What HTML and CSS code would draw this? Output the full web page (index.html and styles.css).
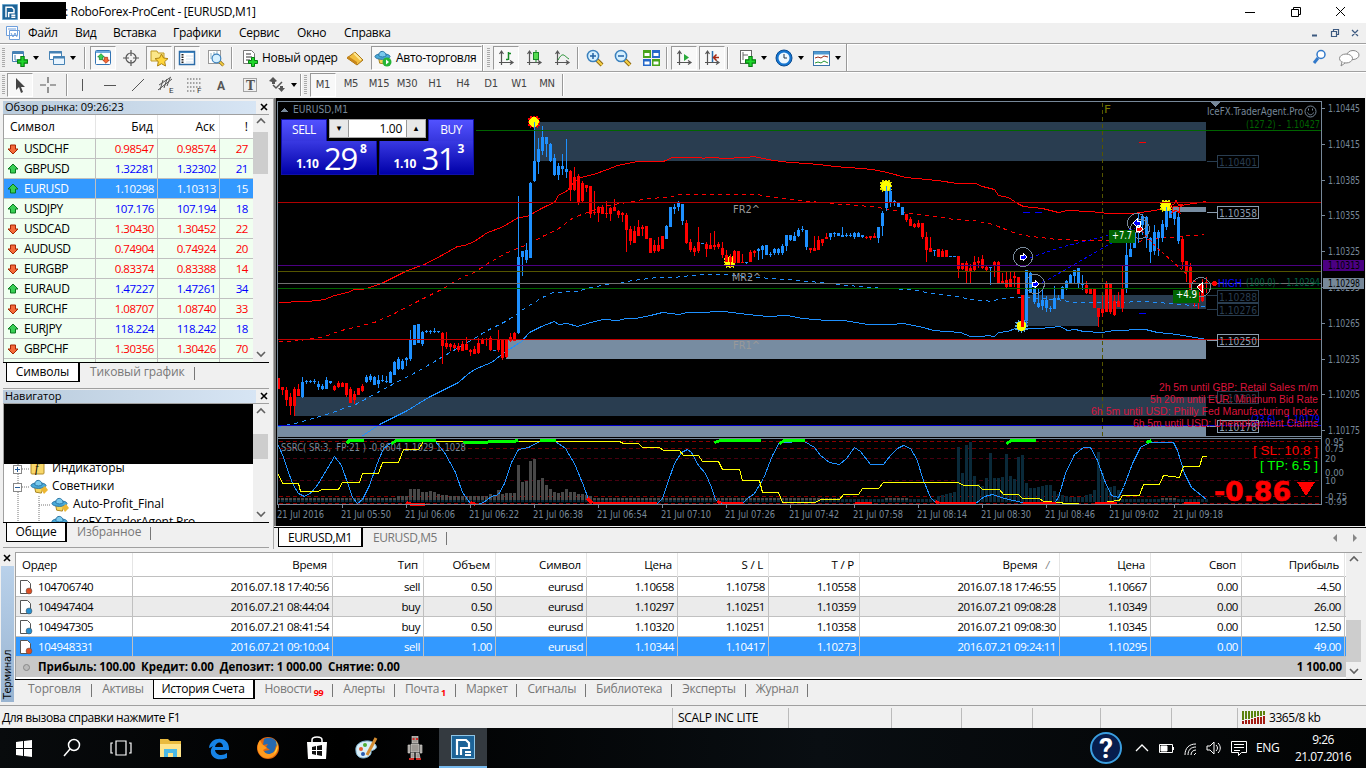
FILE: index.html
```
<!DOCTYPE html>
<html lang="ru">
<head>
  <meta charset="UTF-8">
  <meta name="viewport" content="width=device-width, initial-scale=1">
  <title>RoboForex-ProCent - [EURUSD,M1]</title>
  <link rel="stylesheet" href="styles.css">
</head>
<body>

<!-- shared icon shapes -->
<svg class="defs" width="0" height="0">
  <symbol id="logo" viewBox="0 0 24 24">
    <rect width="24" height="24" fill="#8fc4e4"/><rect x="1" y="1" width="22" height="22" fill="#1d6397"/>
    <path d="M6 20V5h9l3 3v5h-8v7M14 17h6M14 20h6" fill="none" stroke="#fff" stroke-width="2.2"/>
  </symbol>
  <symbol id="plus" viewBox="0 0 10 10"><path d="M3.5 0.5h3v3h3v3h-3v3h-3v-3h-3v-3h3z" fill="#1fd62b" stroke="#087d12"/></symbol>
  <symbol id="axes" viewBox="0 0 18 18"><path d="M4.500 2v14M2 13.500h14M2.500 5l2-3 2 3M13 11.500l3 2-3 2" fill="none" stroke="#555" stroke-width="1.200"/></symbol>
  <symbol id="lens" viewBox="0 0 18 18">
    <path d="M11 11l5 5" stroke="#8a6510" stroke-width="4"/><path d="M11 11l5 5" stroke="#f5cf45" stroke-width="2.200"/>
    <circle cx="7" cy="7" r="5.600" fill="#d5f0ff" stroke="#3a80bd" stroke-width="1.500"/>
  </symbol>
  <symbol id="hat" viewBox="0 0 18 18">
    <path d="M5 10l1 5 6 1 2-6z" fill="#f5d55c" stroke="#a5811d"/><ellipse cx="9" cy="8" rx="8" ry="3" fill="#48a9d8" stroke="#2671a0"/>
    <path d="M5 7c0-6 7-6 8 0-2 2-6 2-8 0" fill="#79c9ed" stroke="#2671a0"/>
  </symbol>
  <symbol id="up" viewBox="0 0 12 12"><path d="M6 1l5 5H8.500v4h-5V6H1z" fill="#38cf55" stroke="#08761e"/></symbol>
  <symbol id="down" viewBox="0 0 12 12"><path d="M6 11l5-5H8.500V2h-5v4H1z" fill="#f46a38" stroke="#a52604"/></symbol>
</svg>

<div class="titlebar">
  <svg class="app-icon"><use href="#logo"/></svg>
  <span class="mask"></span>
  <span class="title">: RoboForex-ProCent - [EURUSD,M1]</span>
  <svg class="win-buttons" width="110" height="22" fill="none" stroke="#000">
    <path d="M4 11.500h10M50.500 8.500h7v7h-7zM52.500 8V6.500h7v7H58M95 6l9 9M104 6l-9 9"/>
  </svg>
</div>

<div class="menubar">
  <svg class="menu-icon" width="16" height="16" fill="#fff" stroke="#6e9fdc"><path d="M1.500 1.500h11v9h-11zM3 4h8M4.500 5.500h10v9h-10zM6 8l2 4 2-4 2 4"/></svg>
  <span class="m1">Файл</span><span class="m2">Вид</span><span class="m3">Вставка</span><span class="m4">Графики</span><span class="m5">Сервис</span><span class="m6">Окно</span><span class="m7">Справка</span>
  <svg class="mdi" width="54" height="16" fill="none" stroke="#3d5a80"><path d="M5 10.500h5" stroke-width="2"/><path d="M24.500 6.500h5v5h-5zM26.500 6V4.500h5v5H30M45 5l6 6M51 5l-6 6" stroke-width="1.200"/></svg>
</div>

<div class="toolbar">
  <i class="grip"></i>
  <div class="tool drop"><svg><path d="M2.500 2.500h11v10h-11z" fill="#fff" stroke="#4682b4"/><path d="M2 4h12" stroke="#4682b4" stroke-width="2"/><path d="M5 6v5h5" fill="none" stroke="#4682b4"/><use href="#plus" x="7" y="7" width="11" height="11"/></svg></div>
  <div class="tool drop profiles"><svg><path d="M1.500 2.500h12v8h-12z" fill="#fff" stroke="#4682b4"/><path d="M5.500 7.500h11v8h-11z" fill="#e9f5ff" stroke="#4682b4"/><path d="M1 3.500h13M5 8.500h12" stroke="#4682b4" stroke-width="2"/></svg></div>
  <i class="sep"></i>
  <div class="tool on"><svg><rect x="1.500" y="1.500" width="15" height="14" rx="1" fill="#fff" stroke="#3475b5"/><path d="M2 3h14" stroke="#6facde" stroke-width="2"/><use href="#up" x="3" y="4" width="8" height="8"/><use href="#down" x="8" y="7" width="8" height="8"/></svg></div>
  <div class="tool"><svg fill="none" stroke="#555" stroke-width="1.200"><circle cx="9" cy="9" r="5"/><path d="M9 1v6M9 11v6M1 9h6M11 9h6"/></svg></div>
  <div class="tool on"><svg><path d="M1 2h6l1 2h6v8H1z" fill="#fbe789" stroke="#c19b24"/><path d="M11.500 5l2 4 4.500.600-3.300 3 .8 4.400-4-2.300-4 2.300.8-4.400L5 9.600 9.500 9z" fill="#ffd63b" stroke="#ad8214"/></svg></div>
  <div class="tool on"><svg><rect x="1.500" y="2.500" width="15" height="13" fill="#fff" stroke="#2d6da9" stroke-width="1.500"/><path d="M2 3.500h14" stroke="#438ac4"/><path d="M4.500 5v9" stroke="#222" stroke-width="2" stroke-dasharray="1.500 1"/><path d="M8 7h7M8 10h7M8 13h7" stroke="#d6e4ef"/></svg></div>
  <div class="tool"><svg><rect x="2.500" y="1.500" width="12" height="13" fill="#fff" stroke="#999"/><path d="M5 4v6M8 3v8M11 2v8" stroke="#8cb3c7"/><use href="#lens" x="5" y="4" width="14" height="14"/></svg></div>
  <i class="sep wide"></i>
  <div class="tool order"><svg><path d="M2.500 1.500h8l3 3v10h-11z" fill="#fff" stroke="#777"/><path d="M5 5h5M5 8h6M5 11h4" stroke="#333"/><use href="#plus" x="7" y="8" width="10" height="10"/></svg><span>Новый ордер</span></div>
  <div class="tool gold"><svg><path d="M1 9l8-6 8 8-6 5z" fill="#f2bf40" stroke="#a57114"/><path d="M1 9l10 7v-3L2 7z" fill="#c9871b"/><path d="M8 4l7 7" stroke="#ffe994" stroke-width="2"/></svg></div>
  <div class="tool on auto"><svg><use href="#hat" width="17" height="17"/><circle cx="13" cy="13" r="4.500" fill="#27b637"/><path d="M12 10.500l3 2.500-3 2.500z" fill="#fff"/></svg><span>Авто-торговля</span></div>
  <i class="sep end"></i><i class="grip second"></i>
  <div class="tool on"><svg><use href="#axes" width="18" height="18"/><path d="M11.500 3v8M9 10.500h2M12 4.500h2" stroke="#168926" stroke-width="1.500"/></svg></div>
  <div class="tool"><svg><use href="#axes" width="18" height="18"/><path d="M11 1v12" stroke="#168926"/><rect x="8.500" y="3.500" width="5" height="7" fill="#54dc50" stroke="#168926"/></svg></div>
  <div class="tool"><svg><use href="#axes" width="18" height="18"/><path d="M5 11c5-9 6-4 11-1" fill="none" stroke="#168926"/></svg></div>
  <i class="sep tight"></i>
  <div class="tool"><svg><use href="#lens" width="18" height="18"/><path d="M4 7h6M7 4v6" stroke="#2262a4" stroke-width="1.500"/></svg></div>
  <div class="tool"><svg><use href="#lens" width="18" height="18"/><path d="M4 7h6" stroke="#2262a4" stroke-width="1.500"/></svg></div>
  <div class="tool"><svg><path d="M1 1h8v8H1zM10 10h8v7h-8z" fill="#47a41b"/><path d="M10 1h8v8h-8zM1 10h8v7H1z" fill="#2568c9"/><path d="M2.500 4h5v3h-5zM11.500 4h5v3h-5zM2.500 12.500h5v3h-5zM11.500 12.500h5v3h-5z" fill="#fff"/></svg></div>
  <i class="sep tight"></i>
  <div class="tool on"><svg><use href="#axes" width="18" height="18"/><path d="M9 5l5 3.500L9 12z" fill="#28a93a"/></svg></div>
  <div class="tool on"><svg><use href="#axes" width="18" height="18"/><path d="M9.500 2v11" stroke="#286daa" stroke-width="1.500"/><path d="M11 8.500h5M13.500 5.500l-3 3 3 3" fill="none" stroke="#a62812" stroke-width="1.500"/></svg></div>
  <i class="sep tight"></i>
  <div class="tool drop chartdrop"><svg><rect x="2.500" y="1.500" width="11" height="13" fill="#fff" stroke="#666"/><path d="M5 3v8M5 6h5" stroke="#666"/><use href="#plus" x="7" y="7" width="11" height="11"/></svg></div>
  <div class="tool drop"><svg><circle cx="9" cy="9" r="8" fill="#1475d1" stroke="#0a4b91"/><circle cx="9" cy="9" r="5.500" fill="#eef8ff"/><path d="M9 5v4h3" fill="none" stroke="#234"/></svg></div>
  <div class="tool drop"><svg><rect x="1.500" y="2.500" width="16" height="14" fill="#fff" stroke="#3973aa"/><path d="M2 4h15" stroke="#4e99d1" stroke-width="3"/><path d="M3 9l3-1 3 1 3-2 4 1" fill="none" stroke="#9c2d19"/><path d="M3 14l3-1 3 1 3-2 4 2" fill="none" stroke="#269632"/></svg></div>
  <i class="sep last"></i>
  <svg class="search-tools" width="48" height="18"><circle cx="9" cy="5.500" r="4" fill="#fff" stroke="#3279ca" stroke-width="1.500"/><path d="M6 9l-4 5" stroke="#3279ca" stroke-width="3"/><g fill="#fff" stroke="#888"><ellipse cx="41" cy="6" rx="6" ry="4.500"/><ellipse cx="34" cy="9.500" rx="6.500" ry="4.500"/><path d="M30 13l-1 4 4-3"/></g></svg>
</div>

<div class="toolbar drawbar">
  <i class="grip"></i>
  <div class="tool on"><svg><path d="M5 2v12l3-3 2 6 2-1-2-5h4z" fill="#444"/></svg></div>
  <div class="tool"><svg stroke="#555"><path d="M9 1v6M9 11v6M1 9h6M11 9h6" stroke-width="1.200"/></svg></div>
  <i class="sep"></i>
  <div class="tool vline"><svg><path d="M9.500 3v12" stroke="#555"/></svg></div>
  <div class="tool"><svg><path d="M3 9.500h12" stroke="#555"/></svg></div>
  <div class="tool"><svg><path d="M3 15L15 3" stroke="#555"/></svg></div>
  <div class="tool"><svg stroke="#555"><path d="M1 14L15 3M2 9L14 1M3 14L6 4M7 12l3-9M10 10l3-8" fill="none"/><text x="12" y="17" class="icon-letter">E</text></svg></div>
  <div class="tool"><svg><path d="M2 3h14M2 7h14M2 11h14M2 15h9" stroke="#555" stroke-dasharray="1.500 1.500"/><text x="12" y="17" class="icon-letter">F</text></svg></div>
  <div class="tool"><svg><text x="4" y="14" class="letter-a">A</text></svg></div>
  <div class="tool"><svg><rect x="2.500" y="2.500" width="13" height="13" fill="none" stroke="#555" stroke-dasharray="1 1"/><text x="5" y="14" class="letter-t">T</text></svg></div>
  <div class="tool drop"><svg fill="#555"><path d="M1 5l4-4 4 4-2 1v2H4V6zM10 12h2v-2h3v2h2l-3.500 4z"/><path d="M5 9l3 3 6-6" fill="none" stroke="#555" stroke-width="1.500"/></svg></div>
  <i class="sep period-edge"></i><i class="grip second"></i>
  <div class="period on">M1</div><div class="period">M5</div><div class="period">M15</div><div class="period">M30</div><div class="period">H1</div><div class="period">H4</div><div class="period">D1</div><div class="period">W1</div><div class="period">MN</div>
  <i class="sep period-last"></i>
</div>

<div class="workspace">
  <div class="sidebar">
    <div class="panel market">
      <div class="panel-title"><span>Обзор рынка: 09:26:23</span><svg class="close"><path d="M1 1l6 6M7 1L1 7"/></svg></div>
      <div class="panel-body">
        <div class="quotes">
          <div class="quote head"><span>Символ</span><span>Бид</span><span>Аск</span><span>!</span></div>
          <div id="quotes"></div>
        </div>
        <div class="scroll"><svg><path d="M4 8l4-4 4 4"/></svg><i></i><svg><path d="M4 3l4 4 4-4"/></svg></div>
      </div>
      <div class="tabs"><b>Символы</b><span>Тиковый график</span></div>
    </div>
    <div class="panel navigator">
      <div class="panel-title"><span>Навигатор</span><svg class="close"><path d="M1 1l6 6M7 1L1 7"/></svg></div>
      <div class="panel-body">
        <div class="tree">
          <div class="redacted"></div>
          <div class="node"><svg width="48" height="18"><path d="M14 0v18M14 9h12" class="dots"/><rect x="9.500" y="5.500" width="8" height="8" class="expand"/><path d="M11 9.500h5M13.500 7v5" stroke="#285e9b"/><rect x="27" y="1" width="13" height="13" rx="1" fill="#f8d769" stroke="#b28d2b"/><text x="31" y="12" class="fn">f</text></svg><span>Индикаторы</span></div>
          <div class="node"><svg width="48" height="18"><path d="M14 0v18M14 9h12" class="dots"/><rect x="9.500" y="5.500" width="8" height="8" class="expand"/><path d="M11 9.500h5" stroke="#285e9b"/><use href="#hat" x="26" y="0" width="17" height="17"/><path d="M37 11l4-3 3 4-4 4z" fill="#edb733"/></svg><span>Советники</span></div>
          <div class="node child"><svg width="69" height="18"><path d="M14 0v18M35 0v18M35 9h12" class="dots"/><use href="#hat" x="47" y="0" width="17" height="17"/><path d="M58 11l4-3 3 4-4 4z" fill="#edb733"/></svg><span>Auto-Profit_Final</span></div>
          <div class="node child"><svg width="69" height="18"><path d="M14 0v18M35 0v18" class="dots"/><use href="#hat" x="47" y="0" width="17" height="17"/></svg><span>IceFX.TraderAgent.Pro</span></div>
        </div>
        <div class="scroll"><svg><path d="M4 9l4-4 4 4"/></svg><i></i><svg><path d="M4 3l4 4 4-4"/></svg></div>
      </div>
      <div class="tabs"><b>Общие</b><span>Избранное</span></div>
    </div>
  </div>

  <div class="chart-pane">
    <div class="chart-window">
      <svg id="chart" viewBox="276 98 1088 428" width="1088" height="428"></svg>
      <div class="trade">
        <div class="trade-top">
          <div class="side">SELL</div>
          <div class="lots"><button>&#9662;</button><span>1.00</span><button>&#9652;</button></div>
          <div class="side">BUY</div>
        </div>
        <div class="prices">
          <div class="price"><small>1.10</small><big>29</big><sup>8</sup></div>
          <div class="price"><small>1.10</small><big>31</big><sup>3</sup></div>
        </div>
      </div>
    </div>
    <div class="tabs chart-tabs"><b>EURUSD,M1</b><span>EURUSD,M5</span>
      <svg width="30" height="10" fill="#888"><path d="M6 1v8L2 5zM22 1v8l4-4z"/></svg></div>
  </div>
</div>

<div class="terminal">
  <div class="terminal-side"><svg class="close"><path d="M1 1l6 6M7 1L1 7"/></svg><div><span>Терминал</span></div></div>
  <div class="terminal-main">
    <div class="panel-body">
      <div class="orders">
        <div class="order-row head"><span>Ордер</span><span>Время</span><span>Тип</span><span>Объем</span><span>Символ</span><span>Цена</span><span>S / L</span><span>T / P</span><span>Время &nbsp; <em>/</em></span><span>Цена</span><span>Своп</span><span>Прибыль</span></div>
        <div id="orders"></div>
        <div class="summary"><i></i><span>Прибыль: 100.00&nbsp; Кредит: 0.00&nbsp; Депозит: 1 000.00&nbsp; Снятие: 0.00</span><span>1 100.00</span></div>
      </div>
      <div class="scroll"><svg><path d="M4 8l4-4 4 4"/></svg><i></i><svg><path d="M4 3l4 4 4-4"/></svg></div>
    </div>
    <div class="tabs"><span>Торговля</span><span class="plain">Активы</span><b>История Счета</b><span>Новости<sub>99</sub></span><span>Алерты</span><span>Почта<sub>1</sub></span><span>Маркет</span><span>Сигналы</span><span>Библиотека</span><span>Эксперты</span><span>Журнал</span></div>
  </div>
</div>

<div class="statusbar">
  <span>Для вызова справки нажмите F1</span><span>SCALP INC LITE</span><span></span><span></span><span></span><span></span><span></span><span></span>
  <span><svg width="24" height="13"><path d="M1 0v9M4 0v8M7 0v8M10 0v7M13 0v6M16 0v5M19 0v5M22 0v4" stroke="#5c820e" stroke-width="2"/><path d="M1 10v3M4 9v4M7 9v4M10 8v5M13 7v6M16 6v7M19 6v7M22 5v8" stroke="#a41b12" stroke-width="2"/></svg>3365/8 kb</span>
</div>

<div class="taskbar">
  <div class="task"><svg fill="#fff"><path d="M4 6l7-1v7H4zM12 5l8-1v8h-8zM4 13h7v7l-7-1zM12 13h8v8l-8-1z"/></svg></div>
  <div class="task"><svg fill="none" stroke="#fff" stroke-width="1.500"><circle cx="14" cy="9" r="5.500"/><path d="M10 13l-6 7"/></svg></div>
  <div class="task"><svg fill="none" stroke="#fff" stroke-width="1.200"><path d="M7 5h10v14H7zM4 7H2v10h2M20 7h2v10h-2"/></svg></div>
  <div class="task"><svg><path d="M2 3h8l2 2h11v16H2z" fill="#e9ba3e"/><path d="M2 8h21v13H2z" fill="#ffe48a"/><path d="M6 21v-8h13v8h-4v-4h-5v4z" fill="#4bb9e6"/></svg></div>
  <div class="task"><svg><path d="M2 12C3 0 23-1 22 14H8c1 6 8 6 12 3v5C7 27 0 17 6 10c-2 1-3 2-4 2zm6-1h8c0-6-7-6-8 0z" fill="#1683e6"/></svg></div>
  <div class="task"><svg><circle cx="12" cy="12" r="11" fill="#e5670b"/><path d="M8 3c6-3 13 0 14 7-2-2-2 0-3 3-1 6-9 7-11 2l6-1-4-3 2-3-5 1z" fill="#276ab0"/><path d="M4 4c-5 7-2 17 7 18 8 0 11-6 11-12-5 10-12 10-15 4l4-2-5-4z" fill="#ff9b1e"/><path d="M20 5c3 4 2 10-2 13l3-8z" fill="#ffd43a"/></svg></div>
  <div class="task"><svg><path d="M2 6h20l-1 17H3z" fill="#fff"/><path d="M7 7V4c0-4 10-4 10 0v3" fill="none" stroke="#fff" stroke-width="1.500"/><path d="M7 11l4-1v4H7zM12 10l5-1v5h-5zM7 15h4v4l-4-1zM12 15h5v5l-5-1z" fill="#111"/></svg></div>
  <div class="task"><svg><path d="M2 15C0 5 16 2 21 8c4 5-2 6-4 7 1 4-3 7-8 7-4 0-7-3-7-7z" fill="#d9eff9" stroke="#7eb3d1"/><circle cx="7" cy="13" r="2" fill="#e35b2b"/><circle cx="11" cy="9" r="2" fill="#50ac35"/><circle cx="9" cy="18" r="2" fill="#285bb0"/><path d="M13 19L22 2" stroke="#d28c32" stroke-width="3"/></svg></div>
  <div class="task"><svg><path d="M9 0h6v7H9zM8 8h8v8H8zM5 9h2v8H5zM17 9h2v8h-2zM8 17h3v5H8zM13 17h3l1 5h-4z" fill="#9d9994" stroke="#dedbd6" stroke-width=".6"/><path d="M9.500 3h2M13 3h2M6 23h5M13 23h5" stroke="#d02b25" stroke-width="2"/></svg></div>
  <div class="task running"><svg><use href="#logo" width="24" height="24"/></svg></div>
  <div class="tray">
    <svg width="32" height="32"><circle cx="16" cy="16" r="15" fill="#071d4d" stroke="#3b9edf" stroke-width="2"/><text x="9" y="26" class="help">?</text></svg>
    <svg class="tray-icons" width="112" height="20" fill="none" stroke="#fff"><path d="M1 13l6-6 6 6" stroke-width="1.300"/><path d="M24.500 6.500h13v8h-13z"/><path d="M26 8h6v5h-6z" fill="#fff"/><path d="M38.500 9v3"/><path d="M50 17c0-7 4-11 11-11M53 17c0-5 3-8 8-8M56 17c0-3 2-5 5-5M59 17l2-2"/><path d="M72 8h3l4-4v12l-4-4h-3zM81 7c2 2 2 4 0 6M83 5c3 3 3 7 0 10"/><path d="M96.500 3.500h15v11h-5l-3 3v-3h-7zM99 6.500h10M99 9.500h10M99 12.500h6"/></svg>
    <span class="lang">ENG</span>
    <div class="clock">9:26<br>21.07.2016</div>
  </div>
</div>

<script src="app.js"></script>
</body>
</html>
```
FILE: styles.css
```
* {
  box-sizing: border-box;
  margin: 0;
  padding: 0;
}

body {
  width: 1366px;
  height: 768px;
  overflow: hidden;
  display: flex;
  flex-direction: column;
  background: #f0f0f0;
  color: #000;
  font: 12px/16px "Open Sans", "Noto Sans", sans-serif;
  letter-spacing: -0.3px;
  white-space: nowrap;
}

.defs {
  position: absolute;
}

.titlebar {
  height: 23px;
  background: #fff;
  display: flex;
  align-items: center;
}

.app-icon {
  width: 16px;
  height: 16px;
  margin-left: 2px;
}

.mask {
  width: 46px;
  height: 17px;
  margin: -3px 0 0 2px;
  background: #000;
}

.title {
  margin-left: -1px;
  letter-spacing: -0.33px;
}

.win-buttons {
  margin-left: auto;
  margin-right: 15px;
}

.menubar {
  height: 20px;
  display: flex;
  align-items: center;
}

.menu-icon { margin-left: 5px; }
.menubar span { flex: none; }
.m1 { width: 47px; margin-left: 7px; }
.m2 { width: 38px; }
.m3 { width: 60px; }
.m4 { width: 66px; }
.m5 { width: 58px; }
.m6 { width: 47px; }
.mdi { margin-left: auto; margin-right: 5px; }

/* toolbars */
.toolbar {
  height: 28px;
  border-top: 1px solid #a0a0a0;
  display: flex;
  align-items: center;
  box-shadow: inset 0 1px #fff;
}

.toolbar .grip {
  width: 3px;
  height: 20px;
  margin: 0 2px;
  flex: none;
  background: repeating-linear-gradient(#aaa 0 1px, #f0f0f0 1px 2px);
}

.toolbar .grip.second { margin-left: 2px; margin-right: 3px; }

.sep {
  flex: none;
  width: 2px;
  height: 22px;
  margin: 0 4px 0 3px;
  border-left: 1px solid #999;
  border-right: 1px solid #fff;
}

.tool {
  flex: none;
  width: 26px;
  height: 24px;
  margin-right: 2px;
  display: flex;
  align-items: center;
  justify-content: center;
}

.tool svg {
  flex: none;
  width: 18px;
  height: 18px;
  overflow: visible;
}

.on {
  background: #f8f8f8;
  border: 1px solid #fff;
  border-top-color: #999;
  border-left-color: #999;
}

.drop {
  width: 35px;
  justify-content: space-between;
  padding-left: 3px;
}

.drop::after {
  content: "";
  border: 3px solid transparent;
  border-top: 4px solid #000;
  border-bottom: 0;
  margin-right: 3px;
}

.profiles { padding-left: 4px; }
.sep.wide { margin-left: 1px; margin-right: 6px; }
.order { width: 101px; justify-content: flex-start; gap: 3px; padding-left: 2px; }
.order span { letter-spacing: -.25px; }
.gold { margin-right: 3px; }
.auto { width: 111px; justify-content: flex-start; gap: 4px; padding-left: 2px; margin-right: 0; }
.sep.end { margin: 0 1px 0 0; height: 26px; }
.sep.tight { margin: 0 3px 0 0; }
.chartdrop { margin-left: 3px; }
.sep.last { margin: 0; height: 27px; }
.search-tools { margin-left: auto; margin-right: 6px; }

.drawbar { height: 27px; }
.vline { margin-left: -3px; }
.icon-letter { font: 8px Roboto; fill: #333; stroke: none; }
.letter-a { font: bold 12px Roboto; fill: #555; }
.letter-t { font: bold 12px "DejaVu Serif"; fill: #555; }

.period {
  width: 26px;
  height: 24px;
  margin-right: 2px;
  font: 10px/22px "DejaVu Sans", sans-serif;
  letter-spacing: -.3px;
  color: #444;
  text-align: center;
}

.period-edge { margin-left: 0; margin-right: 0; }
.period-last { margin-left: 0; }
.drawbar .drop { margin-right: 0; }

/* work area */
.workspace {
  height: 451px;
  display: flex;
}

.sidebar {
  width: 274px;
  padding: 0 4px 0 3px;
  border-top: 1px solid #a0a0a0;
  border-right: 1px solid #aaa;
}

.panel {
  height: 290px;
  border-bottom: 1px solid #a0a0a0;
}

.panel.navigator { height: 159px; }

.panel-title {
  height: 15px;
  padding: 1px 0 0;
  display: flex;
  align-items: center;
}

.navigator .panel-title { height: 14px; padding: 0; }

.panel-title span {
  width: 253px;
  height: 13px;
  padding-left: 2px;
  font-size: 11px;
  line-height: 12px;
  letter-spacing: -.05px;
  background: linear-gradient(90deg, #b9cbdc, #d7e5f4);
}

.close {
  width: 8px;
  height: 8px;
  stroke: #000;
  stroke-width: 1.6;
  flex: none;
}

.panel-title .close { margin-left: 4px; }

.panel-body {
  display: flex;
  overflow: hidden;
  border-top: 1px solid #a0a0a0;
  border-left: 1px solid #a0a0a0;
}

.market .panel-body { height: 248px; }
.quotes { width: 249px; background: #f0fff0; overflow: hidden; }

.quote {
  display: grid;
  grid-template-columns: 92px 62px 62px 32px;
  height: 20px;
  border-bottom: 1px solid #c0c0c0;
}

.quote span {
  border-right: 1px solid #c0c0c0;
  text-align: right;
  padding-right: 3px;
  line-height: 19px;
  font-size: 11.5px;
  letter-spacing: -.45px;
}

.quote span:first-child {
  text-align: left;
  display: flex;
  align-items: center;
  padding-left: 3px;
  gap: 5px;
  font-size: 12px;
  letter-spacing: -.4px;
}

.quote span:last-child { border-right: 0; padding-right: 4px; }
.quote svg { width: 12px; height: 12px; }
.quote.falling span { color: #f00; }
.quote.rising span { color: #00f; }
.quote span.name { color: #000; }
.quote.selected { background: #3399ff; }
.quote.selected span { color: #fff; }

.quote.head {
  height: 24px;
  background: #fff;
}

.quote.head span {
  font-size: 12px;
  line-height: 23px;
  letter-spacing: 0;
  padding-right: 4px;
  border-color: #e5e5e5;
}

.quote.head span:first-child { padding-left: 6px; }

.scroll {
  width: 16px;
  display: flex;
  flex-direction: column;
  background: #f0f0f0;
}

.scroll svg {
  width: 16px;
  height: 13px;
  fill: none;
  stroke: #606060;
  stroke-width: 1.6;
}

.scroll i { background: #cdcdcd; width: 15px; height: 42px; margin: 4px 0 auto; }

/* sheet tabs under the panels */
.tabs {
  height: 20px;
  border-top: 1px solid #000;
  display: flex;
  color: #777;
  letter-spacing: -.1px;
}

.tabs b {
  font-weight: normal;
  color: #000;
  background: #fff;
  border: 1px solid #000;
  border-top: 0;
  border-right-width: 2px;
  margin-left: 3px;
  height: 19px;
  width: 74px;
  line-height: 17px;
  text-align: center;
}

.tabs span { padding: 0 10px; position: relative; line-height: 17px; }

.tabs span::after {
  content: "";
  position: absolute;
  right: 0;
  top: 4px;
  height: 13px;
  border-right: 1px solid #777;
}

.navigator .panel-body { height: 119px; }
.navigator .tabs b { width: 61px; }

.tree {
  width: 249px;
  background: #fff;
  overflow: hidden;
}

.redacted { height: 60px; background: #000; margin-bottom: -4px; position: relative; }
.node { display: flex; height: 18px; letter-spacing: -.1px; }
.node svg { flex: none; }
.dots { stroke: #777; stroke-dasharray: 1 1; fill: none; }
.expand { fill: #fff; stroke: #888; }
.fn { font: italic 12px "Liberation Serif"; }
.navigator .scroll i { height: 25px; margin-top: 17px; }

.chart-pane { width: 1092px; }

.chart-window {
  position: relative;
  height: 428px;
  width: 1091px;
  border-left: 2px solid #777;
  background: #000;
}

#chart { display: block; shape-rendering: crispEdges; }
#chart text { font-family: "DejaVu Sans Condensed", "DejaVu Sans", sans-serif; letter-spacing: 0; }
#chart .arial { font-family: "Liberation Sans", sans-serif; }
#chart .pips { font-family: "DejaVu Sans", sans-serif; font-weight: bold; stroke: #f00; stroke-width: .6; }

/* one click trading box over the chart */
.trade {
  position: absolute;
  left: 5px;
  top: 21px;
  width: 193px;
  height: 57px;
  color: #fff;
}

.trade-top { display: flex; height: 22px; }

.side {
  width: 46px;
  height: 22px;
  background: linear-gradient(#5252ff, #3636de);
  text-align: center;
  line-height: 19px;
  letter-spacing: -.5px;
  border: 1px solid #1010a8;
  border-bottom: 0;
}

.lots {
  width: 97px;
  height: 19px;
  margin: 0 2px;
  display: flex;
  color: #000;
  background: #fff;
  border: 1px solid #aaa;
}

.lots button {
  width: 19px;
  border: 0;
  background: #e8e8e8;
  border-right: 1px solid #999;
  font: 9px/15px "DejaVu Sans";
}

.lots button:last-child { border-right: 0; border-left: 1px solid #999; }
.lots span { flex: 1; text-align: right; padding-right: 4px; line-height: 17px; }
.prices { display: flex; gap: 2px; }

.price {
  position: relative;
  width: 96px;
  height: 34px;
  display: flex;
  align-items: flex-end;
  padding: 0 8px 3px 14px;
  background: linear-gradient(#3939e2, #0000a8);
  border: 1px solid #1010a8;
  border-top: 0;
}

.price small { font-weight: bold; font-size: 12px; line-height: 14px; letter-spacing: -.4px; width: 28px; }
.price big { font-size: 31px; line-height: 26px; width: 36px; letter-spacing: -1.2px; }
.price sup { font-size: 12px; line-height: 14px; font-weight: bold; align-self: flex-start; margin-top: 1px; }

.chart-tabs { height: 21px; border-top: 1px solid #000; margin-top: 1px; align-items: flex-start; }
.chart-tabs b { width: 85px; margin-left: 4px; line-height: 19px; letter-spacing: -.4px; }
.chart-tabs span { line-height: 19px; letter-spacing: -.4px; }
.chart-tabs svg { margin: 5px 5px 0 auto; }

/* terminal */
.terminal {
  height: 156px;
  display: flex;
  padding-top: 3px;
}

.terminal-side { width: 15px; }
.terminal-side .close { display: block; margin: 2px 0 4px 3px; }

.terminal-side div {
  width: 13px;
  height: 136px;
  margin-left: 1px;
  background: linear-gradient(#b9d1ea, #99b4d1);
  display: flex;
  align-items: flex-start;
}

.terminal-side span {
  writing-mode: vertical-rl;
  transform: rotate(180deg);
  font: 10px/13px "DejaVu Sans", sans-serif;
  letter-spacing: -.3px;
  margin-top: auto;
  padding-top: 3px;
}

.terminal-main { width: 1347px; }
.terminal .panel-body { height: 127px; }
.orders { width: 1330px; background: #fff; }

.order-row {
  display: grid;
  grid-template-columns: 117px 200px 91px 72px 91px 91px 91px 91px 200px 91px 91px 103px;
  height: 20px;
  border-bottom: 1px solid #c0c0c0;
}

.order-row span {
  border-right: 1px solid #c0c0c0;
  text-align: right;
  padding-right: 3px;
  font-size: 11.5px;
  line-height: 19px;
  letter-spacing: -.45px;
}

.order-row span:first-child { text-align: left; display: flex; align-items: center; gap: 5px; padding-left: 3px; }
.order-row svg { width: 14px; height: 16px; flex: none; }
.order-row:nth-child(even) { background: #ebebeb; }
.order-row:nth-child(4) { background: #3399ff; color: #fff; }
.order-row.head { height: 24px; }
.order-row.head span { line-height: 24px; padding-right: 5px; border-color: #e5e5e5; letter-spacing: -.2px; }
.order-row.head span:first-child { padding-left: 6px; }
.order-row.head em { color: #777; font-size: 10px; margin-right: 5px; }
.summary { height: 20px; background: #c8c8c8; font-weight: bold; display: flex; align-items: center; letter-spacing: -.05px; font-size: 11.5px; }
.summary i { width: 7px; height: 7px; border-radius: 50%; border: 1px solid #888; background: #bbb; margin: 0 8px 0 7px; }
.summary span:last-child { margin-left: auto; padding-right: 4px; }
.terminal .scroll i { margin: auto 0 4px; }
.terminal .tabs { letter-spacing: -.3px; }
.terminal .tabs span { line-height: 18px; }
.terminal .tabs span:first-child { padding: 0 11px 0 13px; letter-spacing: -.1px; }
.terminal .tabs b { width: 102px; margin: 0 0 0 -1px; line-height: 18px; letter-spacing: -.25px; }
.plain::after { display: none; }
.tabs sub { color: #f00; font-size: 9px; font-weight: bold; vertical-align: -3px; margin-left: 2px; line-height: 0; }

.statusbar {
  height: 23px;
  display: grid;
  grid-template-columns: 672px 116px 103px 70px 71px 68px 71px 66px 129px;
  border-top: 1px solid #a0a0a0;
  line-height: 24px;
}

.statusbar span { border-left: 1px solid #bbb; padding-left: 5px; margin-top: 2px; line-height: 19px; }
.statusbar span:first-child { border: 0; padding-left: 2px; letter-spacing: -.4px; }
.statusbar span:last-child { padding-left: 4px; letter-spacing: -.45px; }
.statusbar svg { vertical-align: -2px; margin-right: 3px; }

.taskbar {
  height: 40px;
  flex: none;
  display: flex;
  background: linear-gradient(90deg, #080b0d, #000 25%, #090e12 60%, #020303);
  color: #fff;
}

.task { width: 49px; display: grid; place-items: center; }
.task:nth-child(-n+2) { width: 48px; }
.task svg { width: 24px; height: 24px; }
.running { width: 48px; background: #343a40; border-bottom: 2px solid #76b9ed; }
.tray { margin-left: auto; display: flex; align-items: center; width: 276px; }
.help { font: bold 28px Roboto; fill: #fff; }
.tray-icons { margin-left: 13px; }
.lang { width: 24px; margin-left: 9px; letter-spacing: -.4px; }
.clock { width: 80px; margin-left: 3px; text-align: center; line-height: 17px; letter-spacing: -.5px; }
```
FILE: app.js
```
const quotes = [
  ['USDCHF', '0.98547', '0.98574', 27, 0], ['GBPUSD', '1.32281', '1.32302', 21, 1],
  ['EURUSD', '1.10298', '1.10313', 15, 1], ['USDJPY', '107.176', '107.194', 18, 1],
  ['USDCAD', '1.30430', '1.30452', 22, 0], ['AUDUSD', '0.74904', '0.74924', 20, 0],
  ['EURGBP', '0.83374', '0.83388', 14, 0], ['EURAUD', '1.47227', '1.47261', 34, 1],
  ['EURCHF', '1.08707', '1.08740', 33, 0], ['EURJPY', '118.224', '118.242', 18, 1],
  ['GBPCHF', '1.30356', '1.30426', 70, 0]
];

document.getElementById('quotes').innerHTML = quotes.map(q =>
  `<div class="quote ${q[4] ? 'rising' : 'falling'} ${q[0] === 'EURUSD' ? 'selected' : ''}">
    <span class="name"><svg><use href="#${q[4] ? 'up' : 'down'}"/></svg>${q[0]}</span>
    <span>${q[1]}</span><span>${q[2]}</span><span>${q[3]}</span></div>`
).join('') + '<div class="quote"><span></span><span></span><span></span><span></span></div>';

const orders = [
  '104706740|2016.07.18 17:40:56|sell|0.50|eurusd|1.10658|1.10758|1.10558|2016.07.18 17:46:55|1.10667|0.00|-4.50',
  '104947404|2016.07.21 08:44:04|buy|0.50|eurusd|1.10297|1.10251|1.10359|2016.07.21 09:08:28|1.10349|0.00|26.00',
  '104947305|2016.07.21 08:41:54|buy|0.50|eurusd|1.10320|1.10251|1.10358|2016.07.21 09:08:30|1.10345|0.00|12.50',
  '104948331|2016.07.21 09:10:04|sell|1.00|eurusd|1.10344|1.10417|1.10273|2016.07.21 09:24:11|1.10295|0.00|49.00'
];

document.getElementById('orders').innerHTML = orders.map(line => {
  const cells = line.split('|');
  const color = cells[2] === 'sell' ? '#dc4d22' : '#258ed0';
  const icon = `<svg><path d="M1.500 1.500h7l3 3v10h-10z" fill="#fff" stroke="#555"/><circle cx="10" cy="12" r="3" fill="${color}" stroke="#555" stroke-width=".5"/></svg>`;
  return '<div class="order-row">' + cells.map((c, i) => `<span>${i ? '' : icon}${c}</span>`).join('') + '</div>';
}).join('');

// one candle every 4px: colour, high, top, bottom, low
const candles = `r378 378 389 389;r387 387 390 395;r387 390 400 406;r393 397 406 415;r387 389 406 416;r384 389 396 396;b377 382 397 398;b380 381 382 384;b380 381 382 383;b379 381 382 384;
b381 384 387 390;b384 386 389 390;b377 380 389 389;b381 381 383 384;r385 386 390 391;r381 383 387 388;r382 383 387 387;r383 383 395 397;r387 389 403 403;r391 394 400 404;
r388 388 395 395;r384 386 391 392;b375 377 382 383;b374 376 380 382;b376 377 385 385;b375 380 384 388;b375 380 381 382;b376 381 382 383;b371 372 383 383;b361 362 375 375;
b357 359 369 370;b359 361 369 370;b357 358 360 366;b330 340 359 361;b325 325 345 345;b324 324 343 343;b331 332 344 346;b330 331 332 333;b330 331 332 334;b328 331 332 333;
b331 331 332 333;r332 333 346 364;r332 343 347 349;r343 344 347 351;r343 345 348 349;r343 346 350 352;r341 344 351 351;r337 344 350 350;r349 350 352 356;r346 349 354 354;
r338 343 353 354;r338 339 344 344;r338 339 340 346;r336 338 350 351;b350 350 351 351;r330 340 350 352;r339 339 358 360;r339 339 357 358;r333 337 341 342;r332 333 341 341;
b196 257 333 334;b251 251 257 276;b243 250 260 263;b182 183 258 258;b122 161 181 182;b138 149 162 174;b126 137 151 155;b137 137 144 157;b143 144 161 162;b154 158 175 176;
b163 166 175 180;b154 166 169 175;b139 169 172 178;r170 171 190 201;r167 177 190 191;r174 176 202 205;r181 183 201 202;r185 185 188 192;r186 186 214 218;r191 212 213 215;
r206 207 213 222;r205 207 214 214;r201 213 214 218;r207 208 214 221;r199 207 211 211;r210 211 215 218;r212 213 215 222;r213 215 230 252;r226 229 241 245;r226 231 243 243;
r220 227 236 236;r225 227 229 236;r226 226 239 239;r238 238 253 253;r240 245 251 253;r237 245 251 252;r236 236 249 249;b225 226 239 239;b207 207 227 227;b204 207 209 214;
b201 202 207 211;b204 204 221 225;r220 223 243 244;r239 242 250 252;r246 248 252 256;r227 242 251 253;b243 243 244 244;r242 244 249 257;r233 245 249 249;r231 245 247 250;
r242 244 247 249;r242 248 255 258;r250 255 262 262;r254 257 262 267;r250 251 263 263;r251 251 263 263;r254 262 263 263;b262 262 263 264;r250 252 262 262;r250 251 253 257;
b248 249 251 260;b245 246 250 259;b245 245 255 255;b252 254 255 257;b248 249 253 255;b248 249 253 255;b244 246 253 255;b235 235 246 251;b235 235 240 241;b232 236 241 241;
b228 230 236 237;b226 229 230 232;b230 230 247 250;r248 248 250 253;r236 248 251 251;r236 240 250 250;r239 239 243 246;r233 237 239 239;b233 233 237 240;b232 233 234 237;
b233 233 236 236;b227 235 237 237;b233 235 236 237;b233 235 236 237;b232 233 237 239;b232 233 237 237;b235 235 237 238;r236 237 238 239;r236 236 238 240;r233 236 238 238;
b227 227 238 243;b211 213 226 236;b186 191 208 211;b187 191 202 207;b200 201 203 206;b202 202 207 207;b207 207 215 215;r214 214 220 222;r217 219 226 226;r223 224 227 228;
r220 223 227 228;r223 223 237 239;r232 237 250 262;r237 248 252 252;b250 250 251 256;r249 249 257 257;r249 251 257 257;r250 250 257 257;b256 256 257 257;b256 256 257 257;
r256 256 269 278;r263 263 269 270;r261 263 271 283;r264 268 271 283;r256 262 270 272;r257 261 263 268;r255 259 268 269;r265 267 270 272;b267 267 268 285;r261 262 265 277;
r261 262 283 283;r273 281 283 283;r271 280 287 288;r271 279 287 287;r271 276 278 287;r277 277 294 294;r295 295 327 327;b270 270 321 325;b271 273 293 293;b287 288 302 304;
b288 303 307 308;b290 300 306 310;b296 300 308 312;b306 308 309 312;b286 298 309 309;b295 298 299 299;b286 287 299 299;b280 281 288 290;b274 275 283 283;b270 270 276 283;
b268 268 284 288;b275 284 285 290;r281 285 293 294;r288 289 294 294;r288 289 308 308;r308 308 317 327;r296 309 313 317;r281 284 312 312;r284 284 312 314;r295 301 315 316;
r292 301 307 307;r265 288 308 312;b242 255 288 293;b242 249 257 257;b231 232 248 248;b213 225 230 243;b214 216 225 235;b216 217 238 248;b237 238 252 263;b225 232 251 255;
b230 232 238 256;b220 224 238 242;b207 211 227 230;b210 211 218 218;b210 211 219 225;b211 217 241 244;r236 239 262 269;r261 261 272 282;r263 267 291 295;r292 293 302 307;
r290 292 302 309;r279 285 301 302;r277 282 283 293`;

const lines = {
  upper: '278,302 287,302 294,301 307,301 317,300 324,299 334,295 347,292 354,289 362,289 369,287 381,283 391,278 407,270 424,264 441,255 457,246 464,245 474,241 487,232 501,227 518,217 527,216 541,208 547,205 554,202 558,195 567,190 573,182 580,177 593,174 607,169 617,165 637,161 663,161 672,157 700,157 703,158 706,157 717,157 720,158 747,157 753,156 763,158 773,160 790,162 807,163 828,165 833,166 848,167 872,169 887,172 905,177 937,180 957,183 975,183 982,186 994,189 998,195 1008,197 1017,203 1023,206 1042,208 1058,212 1067,210 1090,211 1108,213 1133,213 1147,211 1160,209 1180,205 1200,202 1206,201',
  upperMid: '278,341 290,341 307,339 324,336 341,330 374,322 394,313 417,301 441,289 461,277 474,272 487,263 507,252 527,244 542,236 557,229 573,217 587,212 607,205 627,202 647,198 667,197 680,194 757,194 780,198 820,202 843,204 870,206 890,209 910,213 937,216 953,219 973,220 993,224 1010,231 1023,235 1057,239 1090,240 1137,241 1157,238 1180,236 1204,234',
  lowerMid: '278,426 295,423 323,415 355,404 390,385 417,371 441,357 467,342 487,330 507,320 527,306 542,297 553,292 577,291 590,287 602,285 620,282 640,279 657,277 673,277 700,274 723,274 757,277 787,279 820,282 848,285 883,288 910,289 937,294 957,296 970,299 993,301 998,298 1020,297 1057,299 1073,302 1113,302 1147,301 1180,304 1206,306',
  lower: '361,436 379,424 407,410 428,397 458,382 467,374 474,369 491,362 504,352 521,341 529,332 541,326 554,321 558,324 567,323 577,326 590,322 603,319 618,320 625,318 635,318 650,315 662,312 678,314 687,312 697,312 723,311 747,314 767,316 787,315 802,318 827,320 843,320 868,324 890,324 903,323 923,327 933,330 960,332 970,336 982,336 987,335 994,336 998,332 1007,331 1015,328 1040,328 1060,326 1067,330 1075,329 1083,331 1102,332 1113,330 1145,329 1157,332 1177,334 1206,339',
  osc: '278,445 283,457 288,472 293,485 298,493 304,496 311,492 318,483 327,468 334,456 341,465 348,485 352,497 357,503 362,499 369,485 376,465 383,448 391,442 396,441 435,441 444,452 455,472 462,492 470,503 477,504 483,502 491,496 498,494 504,483 511,462 518,449 528,447 539,441 555,441 565,448 574,463 583,485 588,499 592,504 656,504 662,498 667,483 674,463 681,452 687,449 691,452 698,465 705,473 711,487 715,499 719,503 742,503 747,498 754,493 763,478 772,455 779,442 804,441 814,447 820,455 829,462 839,464 846,458 854,447 860,451 870,464 883,464 890,455 897,448 903,445 910,448 916,458 923,480 930,497 937,504 975,503 984,496 992,494 1004,498 1022,502 1053,504 1058,497 1065,473 1074,454 1083,447 1090,447 1097,460 1104,480 1111,495 1118,497 1123,487 1132,463 1140,447 1149,442 1173,442 1177,450 1184,473 1191,487 1206,499',
  slow: '278,474 282,483 298,483 300,491 318,491 321,489 338,489 342,482 359,482 362,473 378,473 382,462 398,462 403,449 418,449 423,441 600,441 619,441 623,443 638,443 642,447 659,447 663,450 679,450 683,455 698,455 702,461 718,461 722,469 739,469 742,480 759,480 762,492 778,492 782,502 815,502 820,499 839,499 843,494 858,494 862,488 878,488 883,482 958,482 963,485 978,485 982,489 999,489 1003,494 1018,494 1022,498 1039,498 1043,501 1060,502 1064,503 1092,504 1099,503 1109,501 1119,500 1122,495 1139,495 1143,484 1159,484 1163,475 1179,477 1183,466 1199,466 1202,456 1206,456'
};

let out = '';
const rect = (x, y, w, h, fill) => { out += `<rect x="${x}" y="${y}" width="${w}" height="${h}" fill="${fill}"/>`; };
const path = (points, color, width = 1, dash = '') => {
  out += `<polyline points="${points}" fill="none" stroke="${color}" stroke-width="${width}" stroke-dasharray="${dash}" transform="translate(.5 .5)"/>`;
};
const text = (x, y, s, color, w, size = 10, extra = '') => {
  out += `<text x="${x}" y="${y}" fill="${color}" font-size="${size}" ${w ? `textLength="${w}" lengthAdjust="spacingAndGlyphs"` : ''} ${extra}>${s}</text>`;
};
const gray = '#778899';
const dark = '#293d50';

// price zones
rect(534, 122, 672, 39, dark);
rect(506, 340, 700, 19, '#778ca1');
rect(294, 397, 912, 19, dark);
rect(278, 426, 928, 11, '#778ca1');
rect(1022, 295, 76, 31, dark);
rect(1098, 295, 108, 14, dark);
rect(1172, 207, 34, 5, '#778ca1');

path('1102,102 1102,437', '#555500', 1, '4 3');
path(lines.upper, '#ff0000');
path(lines.upperMid, '#ff0000', 1, '4 4');
path(lines.lowerMid, '#1e90ff', 1, '4 4');
path(lines.lower, '#1e90ff');

// supply and demand star marks
const star = (x, y, edge) => {
  let p = '';
  for (let i = 0; i < 24; i++) {
    const r = i % 2 ? 5 : 7;
    p += `${x + r * Math.cos(i * Math.PI / 12)},${y + r * Math.sin(i * Math.PI / 12)} `;
  }
  out += `<polygon points="${p}" fill="${edge}"/><circle cx="${x}" cy="${y}" r="4.800" fill="#ff0"/>`;
};
star(534, 122, '#ff0000');
star(730, 262, '#e0e000');
star(886, 186, '#e0e000');
star(1021.500, 326, '#55aadd');
star(1166, 206, '#e0e000');

candles.replace(/\n/g, '').split(';').forEach((c, i) => {
  const [high, top, bottom, low] = c.slice(1).split(' ').map(Number);
  const color = c[0] === 'r' ? '#ff0000' : '#1e90ff';
  const x = 278 + i * 4;
  rect(x, high, 1, Math.max(1, low - high), color);
  rect(x - 1, top, 3, Math.max(1, bottom - top), color);
});

// horizontal levels
[[202, '#b00000'], [265, '#4b0082'], [271, '#555500'], [283, '#707070'], [288, '#006400'], [339, '#c00000'], [425, '#0000c8']]
  .forEach(l => rect(278, l[0], 1043, 1, l[1]));
rect(476, 130, 845, 1, '#006400');
rect(1139, 142, 7, 1, '#f00');
rect(1139, 313, 7, 1, '#00f');
rect(1023, 212, 7, 1, '#00f');
rect(1035, 212, 7, 1, '#00f');

// trades
path('1030,257 1060,247 1135,228', '#00f', 1, '3 3');
path('1042,282 1060,272 1136,228', '#00f', 1, '3 3');
path('1141,230 1156,247 1197,283', '#f00', 1, '3 3');
[[1023, 257], [1035, 284], [1137, 223], [1140, 229], [1201, 287]].forEach(c => {
  out += `<circle cx="${c[0]}" cy="${c[1]}" r="9.500" fill="none" stroke="${gray}"/>`;
});
const arrow = (x, y, color, dir) => {
  out += `<path d="M${x} ${y}m${-3 * dir} -2h${3 * dir}v-2l${4 * dir} 4l${-4 * dir} 4v-2h${-3 * dir}z" fill="${color}" stroke="#fff"/>`;
};
arrow(1023, 257, '#00f', 1);
arrow(1035, 284, '#00f', 1);
arrow(1137, 223, '#00f', -1);
arrow(1139, 229, '#f00', 1);
out += '<path d="M1197 287l5-4v9z" fill="#f00" stroke="#fff"/><path d="M1170 206l4-2 2-4 2 4 5 1-4 3 1 5-4-3-4 3 1-4z" fill="none" stroke="#f00"/>';
rect(1109, 230, 26, 13, '#006400');
rect(1173, 290, 26, 13, '#006400');
text(1112, 238.5, '+7.7', '#fff', 20, 11);
text(1176, 298, '+4.9', '#fff', 21, 11);
out += '<circle cx="1214.500" cy="283.500" r="2.500" fill="#f00"/>';

text(733, 213, 'FR2^', '#999', 27, 11);
text(732, 281, 'MR2^', '#999', 29, 11);
text(733, 349, 'FR1^', '#999', 27, 11);
text(293, 113, 'EURUSD,M1', gray, 55, 11);
out += `<path d="M281 112l3.500-4 3.500 4z" fill="${gray}"/><path d="M1210 101h11l-5.500 6z" fill="${gray}"/>`;
text(1104, 113, 'F', '#777700', 7, 11);
text(1207, 115, 'IceFX.TraderAgent.Pro', gray, 96, 11);
out += `<g fill="none" stroke="${gray}" shape-rendering="auto"><circle cx="1310.500" cy="111.500" r="5.500"/><path d="M1307.500 112.500c1 3 5 3 6 0M1308.500 108.500v2M1312.500 108.500v2"/></g>`;
text(1246, 128, '(127.2) -&#160; 1.10427', '#006400', 74);
text(1218, 287, 'HIGH', '#0000ff', 24, 11);
text(1246, 286, '(100.0) -&#160; 1.10294', '#006442', 74);
text(1251, 423, '(23.6) -&#160; 1.10179', '#0000ff', 69);

[[155, '1.10401', dark, 161], [206, '1.10358', '#8c9dae', 212], [290, '1.10288', dark, 295], [303, '1.10276', dark, 309], [334, '1.10250', '#8c9dae', 340], [391, '1.10202', dark, 397], [420, '1.10178', '#8c9dae', 426]].forEach(b => {
  out += `<rect x="1217.500" y="${b[0] + .5}" width="41" height="12" fill="none" stroke="${b[2]}"/>`;
  rect(1207, b[3], 10, 1, b[2]);
  text(1219, b[0] + 11, b[1], b[2], 38, 11);
});

// scales and frames
['1.10445', '1.10415', '1.10385', '1.10355', '1.10325', '1.10295', '1.10265', '1.10235', '1.10205', '1.10175'].forEach((p, i) => {
  const y = Math.round(108 + i * 35.8);
  rect(1322, y, 3, 1, gray);
  text(1328, y + 4, p, gray, 32, 10);
});
rect(1323, 260, 41, 11, '#4b0082');
text(1328, 269, '1.10313', '#000', 32);
rect(1323, 278, 41, 11, gray);
text(1328, 287, '1.10298', '#000', 32);

['2h 5m until GBP: Retail Sales m/m', '5h 20m until EUR: Minimum Bid Rate', '6h 5m until USD: Philly Fed Manufacturing Index', '6h 5m until USD: Unemployment Claims'].forEach((s, i) => {
  const w = [159, 168, 227, 185][i];
  text(1318 - w, 391 + i * 12, s, '#dc143c', w, 11, 'class="arial"');
});

// oscillator window
[[441, '#8b0000'], [448, '#700000'], [458, '#480010'], [480, '#480010'], [496, '#8b0000'], [503, '#8b0000']]
  .forEach(l => path(`278,${l[0]} 1320,${l[0]}`, l[1], 1, '4 3'));
const volume = { 410: 11, 414: 11, 418: 11, 422: 8, 426: 8, 430: 9, 434: 8, 438: 6, 442: 5, 446: 5, 490: 6, 494: 5, 498: 10, 502: 6, 506: 7, 510: 7, 514: 7, 518: 35, 522: 18, 526: 19, 530: 39, 534: 41, 538: 20, 542: 22, 546: 15, 550: 11, 554: 8, 558: 7, 562: 8, 566: 11, 570: 8, 574: 8, 578: 6, 582: 6, 586: 5 };
const spikes = { 938: 6, 942: 7, 946: 8, 950: 9, 954: 10, 958: 55, 962: 29, 966: 57, 970: 60, 974: 26, 978: 18, 982: 16, 986: 24, 990: 49, 994: 24, 998: 24, 1002: 25, 1006: 48, 1010: 26, 1014: 23, 1018: 45, 1022: 47, 1026: 19, 1030: 14, 1034: 14, 1038: 15, 1042: 16, 1046: 17, 1050: 17, 1054: 11, 1058: 8, 1062: 7, 1066: 6, 1070: 5, 1074: 5, 1078: 5, 1082: 5, 1086: 7, 1090: 8, 1094: 12, 1098: 50, 1102: 29, 1106: 14, 1110: 15, 1114: 16, 1118: 12 };
for (let x = 278; x < 1208; x += 4) {
  const isGray = x < 840 || (x > 885 && x < 910) || (x > 1160 && x < 1178);
  rect(x - 1, 500, 3, 2, '#0a2a3a');
  if (isGray) {
    const h = volume[x] || (x > 394 && x < 594 ? 4 : 2);
    rect(x - 1, 500 - h, 3, h, '#484848');
  } else {
    const h = spikes[x] || 3;
    rect(x - 1, 502 - h, 3, h, '#0a2a3a');
  }
}
text(281, 451, 'SSRC( SR:3,&#160; FP:21 ) -0.8604 1.1029 1.1028', gray, 185, 10);
path(lines.osc, '#1e90ff');
path(lines.slow, '#ffff00');
['346,443 349,440 363,440', '391,443 396,440 435,440', '463,442 512,441 518,440', '539,440 555,440', '714,442 720,440 760,440', '779,443 784,440 804,440', '1006,443 1011,440 1035,440', '1146,442 1151,440']
  .forEach(p => path(p, '#00ff00', 3));
['406,502 411,504 424,504', '470,502 475,504', '587,498 592,503 656,503', '717,501 721,503 742,503', '854,503 871,503', '935,501 939,503 975,503', '1022,503 1055,503', '1094,503 1116,503', '1183,503 1199,503']
  .forEach(p => path(p, '#ff0000', 3));

text(1253, 455, '[ SL: 10.8 ]', '#f00', 65, 13, 'class="arial"');
text(1260, 470, '[ TP: 6.5 ]', '#0f0', 58, 13, 'class="arial"');
text(1214, 501, '-0.86', '#f00', 77, 27, 'class="pips"');
out += '<path d="M1297 482h18l-9 14z" fill="#f00"/>';
[[445, '0.95'], [452, '0.75'], [462, '20'], [476, '0.00'], [484, '10'], [500, '-0.75'], [505, '-0.95']].forEach(v => text(1325, v[0], v[1], gray, 0, 9.5));
rect(277, 101, 1045, 1, gray);
rect(277, 101, 1, 404, gray);
rect(1321, 101, 1, 404, gray);
rect(277, 436, 1045, 1, gray);
rect(277, 438, 1045, 1, gray);
rect(277, 504, 1045, 1, gray);
['2016', '05:50', '06:06', '06:22', '06:38', '06:54', '07:10', '07:26', '07:42', '07:58', '08:14', '08:30', '08:46', '09:02', '09:18'].forEach((t, i) => {
  rect(278 + i * 64, 505, 1, 3, gray);
  text(277 + i * 64, 518, '21 Jul ' + t, gray, i ? 50 : 47, 10);
});

document.getElementById('chart').innerHTML = out;
```
